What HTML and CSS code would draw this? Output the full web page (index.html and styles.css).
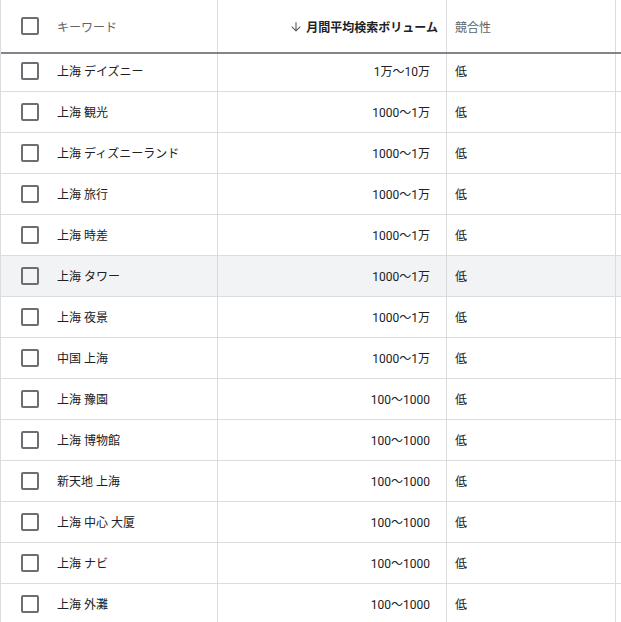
FILE: index.html
```html
<!DOCTYPE html>
<html lang="ja">
<head>
<meta charset="utf-8">
<link rel="stylesheet" href="styles.css">
</head>
<body>
<div class="table">
  <div class="row head">
    <div class="cell kw"><span class="cb"></span><span class="label">キーワード</span></div>
    <div class="cell vol sorted"><svg class="arrow" viewBox="0 0 24 24" width="14" height="14"><path d="M20 12l-1.41-1.41L13 16.17V4h-2v12.17l-5.58-5.59L4 12l8 8 8-8z" fill="#5f6368"/></svg><span>月間平均検索ボリューム</span></div>
    <div class="cell comp"><span class="label">競合性</span></div>
    <div class="cell fill"></div>
  </div>
  <div class="row first">
    <div class="cell kw"><span class="cb"></span><span class="txt">上海 デイズニー</span></div>
    <div class="cell vol">1万～10万</div>
    <div class="cell comp">低</div>
    <div class="cell fill"></div>
  </div>
  <div class="row">
    <div class="cell kw"><span class="cb"></span><span class="txt">上海 観光</span></div>
    <div class="cell vol">1000～1万</div>
    <div class="cell comp">低</div>
    <div class="cell fill"></div>
  </div>
  <div class="row">
    <div class="cell kw"><span class="cb"></span><span class="txt">上海 ディズニーランド</span></div>
    <div class="cell vol">1000～1万</div>
    <div class="cell comp">低</div>
    <div class="cell fill"></div>
  </div>
  <div class="row">
    <div class="cell kw"><span class="cb"></span><span class="txt">上海 旅行</span></div>
    <div class="cell vol">1000～1万</div>
    <div class="cell comp">低</div>
    <div class="cell fill"></div>
  </div>
  <div class="row">
    <div class="cell kw"><span class="cb"></span><span class="txt">上海 時差</span></div>
    <div class="cell vol">1000～1万</div>
    <div class="cell comp">低</div>
    <div class="cell fill"></div>
  </div>
  <div class="row hover">
    <div class="cell kw"><span class="cb"></span><span class="txt">上海 タワー</span></div>
    <div class="cell vol">1000～1万</div>
    <div class="cell comp">低</div>
    <div class="cell fill"></div>
  </div>
  <div class="row">
    <div class="cell kw"><span class="cb"></span><span class="txt">上海 夜景</span></div>
    <div class="cell vol">1000～1万</div>
    <div class="cell comp">低</div>
    <div class="cell fill"></div>
  </div>
  <div class="row">
    <div class="cell kw"><span class="cb"></span><span class="txt">中国 上海</span></div>
    <div class="cell vol">1000～1万</div>
    <div class="cell comp">低</div>
    <div class="cell fill"></div>
  </div>
  <div class="row">
    <div class="cell kw"><span class="cb"></span><span class="txt">上海 豫園</span></div>
    <div class="cell vol">100～1000</div>
    <div class="cell comp">低</div>
    <div class="cell fill"></div>
  </div>
  <div class="row">
    <div class="cell kw"><span class="cb"></span><span class="txt">上海 博物館</span></div>
    <div class="cell vol">100～1000</div>
    <div class="cell comp">低</div>
    <div class="cell fill"></div>
  </div>
  <div class="row">
    <div class="cell kw"><span class="cb"></span><span class="txt">新天地 上海</span></div>
    <div class="cell vol">100～1000</div>
    <div class="cell comp">低</div>
    <div class="cell fill"></div>
  </div>
  <div class="row">
    <div class="cell kw"><span class="cb"></span><span class="txt">上海 中心 大厦</span></div>
    <div class="cell vol">100～1000</div>
    <div class="cell comp">低</div>
    <div class="cell fill"></div>
  </div>
  <div class="row">
    <div class="cell kw"><span class="cb"></span><span class="txt">上海 ナビ</span></div>
    <div class="cell vol">100～1000</div>
    <div class="cell comp">低</div>
    <div class="cell fill"></div>
  </div>
  <div class="row">
    <div class="cell kw"><span class="cb"></span><span class="txt">上海 外灘</span></div>
    <div class="cell vol">100～1000</div>
    <div class="cell comp">低</div>
    <div class="cell fill"></div>
  </div>
</div>
</body>
</html>
```

FILE: styles.css
```css
html, body {
  margin: 0;
  padding: 0;
  background: #ffffff;
}
body {
  font-family: "Roboto", "Noto Sans CJK JP", sans-serif;
  font-size: 12px;
  color: #202124;
  overflow: hidden;
}
.table {
  width: 621px;
  border-left: 1px solid #dadce0;
  box-sizing: border-box;
}
.row {
  display: grid;
  grid-template-columns: 217px 229px 169px 5px;
  height: 41px;
  border-bottom: 1px solid #dadce0;
  box-sizing: border-box;
}
.row.head {
  height: 54px;
  border-bottom: 2px solid #80868b;
}
.row.first {
  height: 38px;
}
.row.first .cell {
  padding-bottom: 3px;
}
.row.hover {
  background: #f1f3f4;
}
.cell {
  display: flex;
  align-items: center;
  border-right: 1px solid #dadce0;
  box-sizing: border-box;
  white-space: nowrap;
  overflow: hidden;
}
.cell.fill {
  border-right: none;
}
.cell.kw {
  padding-left: 20px;
  gap: 18px;
}
.txt {
  margin-bottom: 2px;
}
.cell.vol {
  justify-content: flex-end;
  padding-right: 16px;
}
.row .cell.vol,
.row .cell.comp {
  padding-bottom: 2px;
}
.row.first .cell.vol,
.row.first .cell.comp {
  padding-bottom: 5px;
}
.row.head .cell.vol,
.row.head .cell.comp {
  padding-bottom: 0;
}
.head .cell.vol {
  padding-right: 8px;
  font-weight: 700;
}
.cell.comp {
  padding-left: 8px;
}
.label {
  color: #5f6368;
}
.cb {
  width: 18px;
  height: 18px;
  border: 2px solid #6b6e72;
  border-radius: 2px;
  box-sizing: border-box;
  flex: none;
}
.arrow {
  margin-right: 3px;
  margin-top: 1px;
  flex: none;
}
```
